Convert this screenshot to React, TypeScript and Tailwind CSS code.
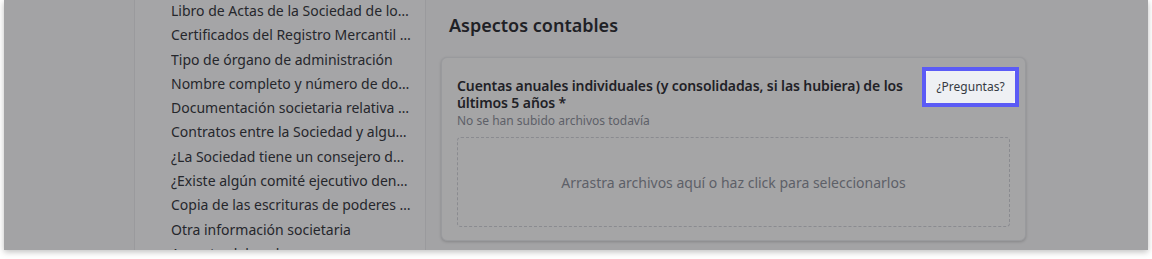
import React from 'react';

const items = [
  'Libro de Actas de la Sociedad de los últimos años',
  'Certificados del Registro Mercantil actualizados',
  'Tipo de órgano de administración',
  'Nombre completo y número de documento de los administradores',
  'Documentación societaria relativa a ampliaciones',
  'Contratos entre la Sociedad y algunos de sus socios',
  '¿La Sociedad tiene un consejero delegado?',
  '¿Existe algún comité ejecutivo dentro del consejo?',
  'Copia de las escrituras de poderes vigentes',
  'Otra información societaria',
  'Aspectos laborales',
];

export default function App() {
  return (
    <div
      className="w-[1152px] h-[259px] bg-white px-[4px] overflow-hidden"
      style={{ fontFamily: '"Noto Sans", "Liberation Sans", sans-serif' }}
    >
      <div className="relative h-[250px] bg-[#a3a3a5] flex overflow-hidden shadow-[0_2px_6px_rgba(0,0,0,0.25)]">
        {/* espacio izquierdo */}
        <div className="w-[130px] shrink-0" />

        {/* sidebar */}
        <div className="w-[292px] shrink-0 border-l border-r border-[#9a9a9d] bg-[#a5a5a7] pl-[36px] pr-[14px] mt-[-1px]">
          {items.map((t) => (
            <div key={t} className="truncate text-[14px] leading-[24.3px] text-[#25272c]">
              {t}
            </div>
          ))}
        </div>

        {/* contenido */}
        <div className="flex-1 pl-[15px] pt-[13px]">
          <h2 className="pl-[8px] text-[18px] leading-[24px] font-semibold text-[#1f2126]">
            Aspectos contables
          </h2>
          <div className="mt-[20px] w-[585px] h-[184px] rounded-[6px] border border-[#999a9d] bg-[#a5a5a6] shadow-[0_1px_3px_rgba(0,0,0,0.18)] pl-[15px] pr-[15px] pt-[19px]">
            <div className="flex items-start gap-[8px]">
              <div className="flex-1">
                <p className="text-[14px] leading-[17px] font-semibold tracking-[-0.1px] text-[#1f2126]">
                  Cuentas anuales individuales (y consolidadas, si las hubiera) de los últimos 5 años *
                </p>
                <p className="mt-[2px] text-[12px] leading-[16px] text-[#5d6068]">
                  No se han subido archivos todavía
                </p>
              </div>
              <div className="shrink-0 mt-[-10px] mr-[-9px] border-[4px] border-[#5b5bf6] bg-white">
                <button className="block w-[89px] h-[32px] rounded-[4px] bg-[#eef0f4] text-[12px] text-[#363a42]">
                  ¿Preguntas?
                </button>
              </div>
            </div>
            <div className="mt-[8px] h-[90px] rounded-[4px] border border-dashed border-[#8a8b90] flex items-center justify-center">
              <span className="text-[14px] text-[#5d6068]">
                Arrastra archivos aquí o haz click para seleccionarlos
              </span>
            </div>
          </div>
        </div>
      </div>
    </div>
  );
}
